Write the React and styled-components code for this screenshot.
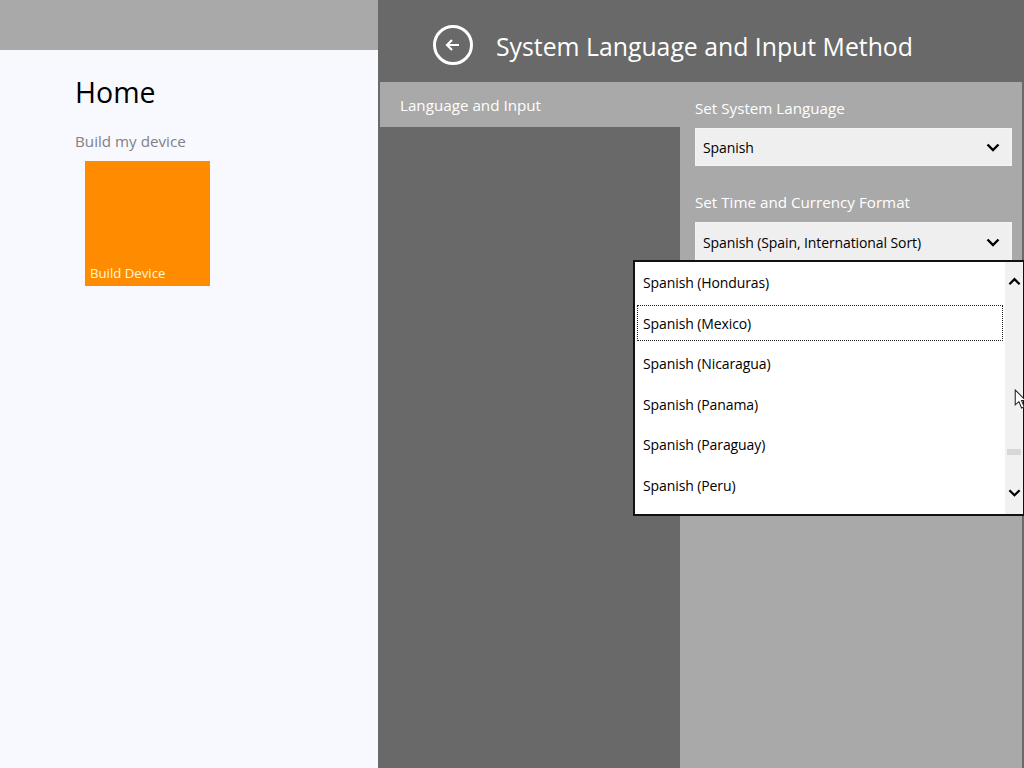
import React from "react";
import styled, { createGlobalStyle } from "styled-components";

const languages = ["Spanish (Honduras)", "Spanish (Mexico)", "Spanish (Nicaragua)", "Spanish (Panama)", "Spanish (Paraguay)", "Spanish (Peru)"];

const Chevron = ({ up, size = 14 }) => (
  <svg width={size} height={size} viewBox="0 0 14 14" fill="none" stroke="#000" strokeWidth="2.4">
    <path d={up ? "M1.5 10 L7 4.5 L12.5 10" : "M1.5 4.5 L7 10 L12.5 4.5"} />
  </svg>
);

export default function App() {
  return (
    <>
      <GlobalStyle />
      <Screen>
        <HomePane>
          <HomeTopBar />
          <HomeBody>
            <HomeTitle>Home</HomeTitle>
            <SectionLabel>Build my device</SectionLabel>
            <Tile>
              <TileLabel>Build Device</TileLabel>
            </Tile>
          </HomeBody>
        </HomePane>
        <SettingsPane>
          <Header>
            <BackButton>
              <svg width="18" height="18" viewBox="0 0 18 18" fill="none" stroke="#fff" strokeWidth="2.2">
                <path d="M15 9 H3 M8 4 L3 9 L8 14" />
              </svg>
            </BackButton>
            <PageTitle>System Language and Input Method</PageTitle>
          </Header>
          <Columns>
            <Nav>
              <NavItem>Language and Input</NavItem>
            </Nav>
            <Content>
              <FieldLabel>Set System Language</FieldLabel>
              <Select>
                Spanish
                <Chevron />
              </Select>
              <FieldLabel $second>Set Time and Currency Format</FieldLabel>
              <Select $tall>
                Spanish (Spain, International Sort)
                <Chevron />
              </Select>
            </Content>
          </Columns>
          <Dropdown>
            <List>
              {languages.map((name) => (
                <Option key={name} $focused={name === "Spanish (Mexico)"}>{name}</Option>
              ))}
            </List>
            <ScrollBar>
              <Chevron up size={13} />
              <ScrollThumb />
              <Chevron size={13} />
            </ScrollBar>
            <Cursor width="13" height="20" viewBox="0 0 12 19">
              <path d="M1 1 L1 15 L4.5 12 L7 18 L9.5 17 L7 11 L11 11 Z" fill="#fff" stroke="#222" strokeWidth="1" />
            </Cursor>
          </Dropdown>
        </SettingsPane>
      </Screen>
    </>
  );
}

const GlobalStyle = createGlobalStyle`
  html, body {
    margin: 0;
    padding: 0;
    background: #696969;
  }
  body {
    font-family: "Open Sans", "Noto Sans", sans-serif;
  }
`;

const Screen = styled.div`
  width: 1024px;
  height: 768px;
  display: flex;
  overflow: hidden;
`;

const HomePane = styled.div`
  width: 378px;
  display: flex;
  flex-direction: column;
  background: #f8f9fe;
`;

const HomeTopBar = styled.div`
  height: 50px;
  background: #a9a9a9;
`;

const HomeBody = styled.div`
  padding: 23px 0 0 75px;
`;

const HomeTitle = styled.h1`
  margin: 0;
  font-size: 28.5px;
  line-height: 38px;
  font-weight: 400;
  color: #000;
`;

const SectionLabel = styled.div`
  margin-top: 20px;
  font-size: 15.2px;
  line-height: 20px;
  color: #808086;
`;

const Tile = styled.div`
  margin: 10px 0 0 10px;
  width: 125px;
  height: 125px;
  background: #ff8c00;
  display: flex;
  align-items: flex-end;
  padding: 0 0 4px 5px;
  box-sizing: border-box;
`;

const TileLabel = styled.span`
  font-size: 13.2px;
  line-height: 18px;
  color: #fff6d8;
`;

const SettingsPane = styled.div`
  position: relative;
  flex: 1;
  display: flex;
  flex-direction: column;
  background: #696969;
`;

const Header = styled.div`
  height: 82px;
  display: flex;
  align-items: center;
  padding-left: 55px;
  padding-top: 10px;
  box-sizing: border-box;
  gap: 23px;
`;

const BackButton = styled.div`
  width: 40px;
  height: 40px;
  margin-bottom: 2px;
  border: 3px solid #fff;
  border-radius: 50%;
  box-sizing: border-box;
  display: flex;
  align-items: center;
  justify-content: center;
`;

const PageTitle = styled.div`
  font-size: 24.8px;
  line-height: 32px;
  color: #fff;
`;

const Columns = styled.div`
  flex: 1;
  display: flex;
  padding-left: 2px;
  padding-right: 2px;
`;

const Nav = styled.div`
  width: 300px;
`;

const NavItem = styled.div`
  height: 45px;
  background: #a9a9a9;
  padding-left: 20px;
  display: flex;
  align-items: center;
  box-sizing: border-box;
  font-size: 15.2px;
  color: #fff;
`;

const Content = styled.div`
  flex: 1;
  background: #a9a9a9;
  padding: 15px 10px 0 15px;
`;

const FieldLabel = styled.div`
  font-size: 15.2px;
  line-height: 22px;
  color: #fff;
  margin-top: ${(p) => (p.$second ? "25px" : "0")};
  margin-bottom: 9px;
`;

const Select = styled.div`
  height: ${(p) => (p.$tall ? "40px" : "38px")};
  background: #efefef;
  border: 1px solid #f4f4f4;
  box-sizing: border-box;
  display: flex;
  align-items: center;
  justify-content: space-between;
  padding: 0 11px 0 7px;
  font-size: 14px;
  letter-spacing: -0.1px;
  color: #000;
`;

const Dropdown = styled.div`
  position: absolute;
  left: 255px;
  top: 260px;
  width: 391px;
  height: 256px;
  background: #fff;
  border: 2px solid #111;
  border-right-width: 1px;
  box-sizing: border-box;
  display: flex;
`;

const List = styled.div`
  flex: 1;
  padding: 0 2px 0 2px;
  box-sizing: border-box;
`;

const Option = styled.div`
  height: ${(p) => (p.$focused ? "36px" : "40.5px")};
  margin: ${(p) => (p.$focused ? "2px 0 3px" : "0")};
  padding-top: ${(p) => (p.$focused ? "1px" : "0")};
  border: 1px dotted ${(p) => (p.$focused ? "#222" : "transparent")};
  box-sizing: border-box;
  display: flex;
  align-items: center;
  padding-left: 5px;
  font-size: 14px;
  letter-spacing: -0.1px;
  color: #000;
`;

const ScrollBar = styled.div`
  position: relative;
  width: 18px;
  background: #f1f1f1;
  display: flex;
  flex-direction: column;
  align-items: center;
  justify-content: space-between;
  padding: 13px 0 15px;
  box-sizing: border-box;
`;

const ScrollThumb = styled.div`
  position: absolute;
  top: 187px;
  left: 2px;
  width: 14px;
  height: 6px;
  background: #d8d8d8;
`;

const Cursor = styled.svg`
  position: absolute;
  right: -4px;
  top: 127px;
`;
